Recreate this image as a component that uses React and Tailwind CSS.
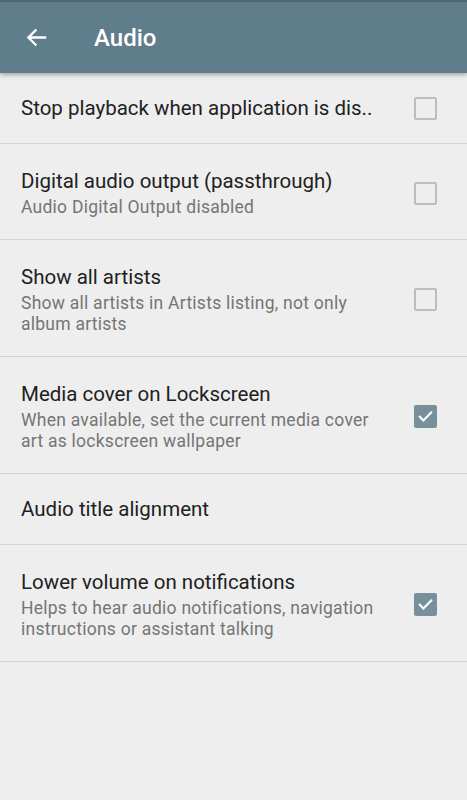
import React from "react";

const rows = [
  { title: "Stop playback when application is dis..", checked: false },
  { title: "Digital audio output (passthrough)", sub: ["Audio Digital Output disabled"], checked: false },
  { title: "Show all artists", sub: ["Show all artists in Artists listing, not only", "album artists"], checked: false },
  { title: "Media cover on Lockscreen", sub: ["When available, set the current media cover", "art as lockscreen wallpaper"], checked: true },
  { title: "Audio title alignment" },
  { title: "Lower volume on notifications", sub: ["Helps to hear audio notifications, navigation", "instructions or assistant talking"], checked: true },
];

function Box({ checked }) {
  if (checked) {
    return (
      <div className="w-[23px] h-[23px] rounded-[2px] bg-[#78909c] flex items-center justify-center">
        <svg width="17" height="17" viewBox="0 0 24 24" fill="none" stroke="white" strokeWidth="3" strokeLinecap="square">
          <path d="M4 12.5l5 5L20 6.5" />
        </svg>
      </div>
    );
  }
  return <div className="w-[23px] h-[23px] rounded-[2px] border-2 border-[#bdbdbd]" />;
}

export default function App() {
  return (
    <div className="w-[467px] h-[800px] bg-[#eeeeee] overflow-hidden" style={{ fontFamily: "Roboto, 'Noto Sans', sans-serif" }}>
      <div className="relative z-10 h-[73px] bg-[#607d8b] border-t-2 border-[#4f6874] shadow-[0_2px_4px_rgba(0,0,0,0.3)] flex items-center">
        <svg className="ml-[25px]" width="23" height="23" viewBox="0 0 24 24" fill="none" stroke="white" strokeWidth="2.4" strokeLinecap="square">
          <path d="M21 12H4M11 4.5L3.5 12 11 19.5" />
        </svg>
        <div className="ml-[46px] text-white text-[24px] font-medium leading-none">Audio</div>
      </div>
      <div>
        {rows.map((r, i) => (
          <div
            key={i}
            className={
              r.sub
                ? "flex items-center border-b border-[#d5d5d5] pl-[21px] pr-[30px] pt-[24px] pb-[21px]"
                : "flex items-center h-[71px] border-b border-[#d5d5d5] pl-[21px] pr-[30px]"
            }
          >
            <div className="flex-1 min-w-0">
              <div className="text-[20.5px] leading-[26px] text-[#212121] whitespace-nowrap">{r.title}</div>
              {r.sub && (
                <div className="mt-[3px] text-[17.5px] leading-[21px] tracking-[0.25px] text-[#757575]">
                  {r.sub.map((s, j) => (
                    <div key={j} className="whitespace-nowrap">{s}</div>
                  ))}
                </div>
              )}
            </div>
            {r.checked !== undefined && <Box checked={r.checked} />}
          </div>
        ))}
      </div>
    </div>
  );
}
